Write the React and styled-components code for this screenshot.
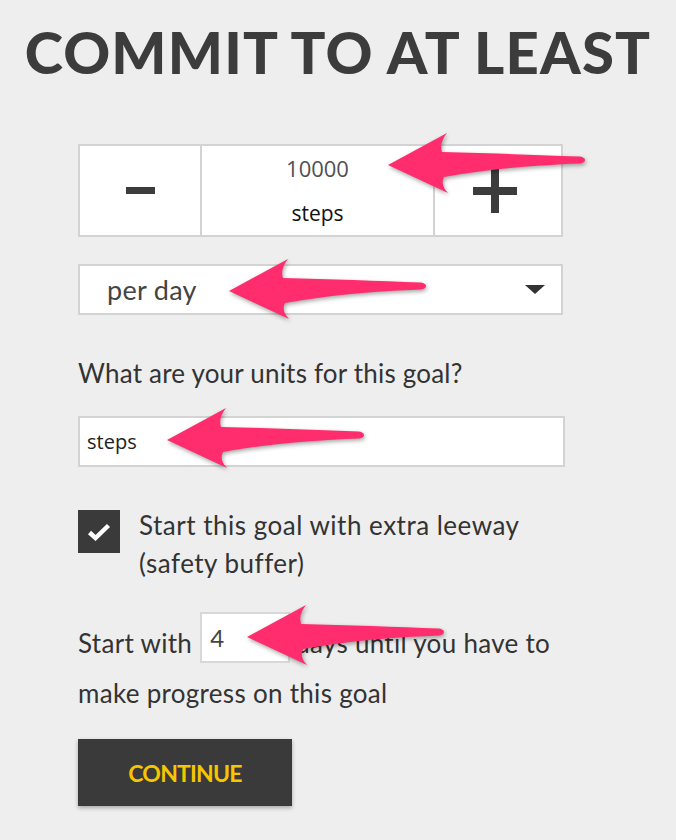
import React from "react";
import styled, { createGlobalStyle } from "styled-components";

const GlobalStyle = createGlobalStyle`
  html, body {
    margin: 0;
    padding: 0;
    background: #eeeeee;
  }
`;

const Page = styled.div`
  position: relative;
  width: 676px;
  min-height: 840px;
  box-sizing: border-box;
  padding-top: 20px;
  background: #eeeeee;
  font-family: Lato, "Open Sans", sans-serif;
  color: #333;
  overflow: hidden;
`;

const Title = styled.h1`
  margin: 0;
  text-align: center;
  font-family: Lato, sans-serif;
  font-weight: 900;
  font-size: 58px;
  line-height: 64px;
  color: #3c3c3c;
  letter-spacing: 1.2px;
`;

const Form = styled.div`
  margin: 60px 0 0 78px;
  width: 485px;
`;

const Stepper = styled.div`
  display: grid;
  grid-template-columns: 122px 233px 126px;
  height: 93px;
  box-sizing: border-box;
  border: 2px solid #d3d3d3;
  background: #fff;
`;

const StepCell = styled.div`
  display: flex;
  flex-direction: column;
  align-items: center;
  justify-content: center;
  border-right: ${(p) => (p.$last ? "none" : "2px solid #d3d3d3")};
`;

const MinusSign = styled.span`
  display: block;
  width: 29px;
  height: 7px;
  background: #3c3c3c;
`;

const PlusSign = styled.span`
  position: relative;
  display: block;
  width: 44px;
  height: 44px;
  margin-left: -6px;

  &::before,
  &::after {
    content: "";
    position: absolute;
    background: #3c3c3c;
  }
  &::before {
    left: 0;
    top: 18px;
    width: 44px;
    height: 8px;
  }
  &::after {
    left: 18px;
    top: 0;
    width: 8px;
    height: 44px;
  }
`;

const Amount = styled.div`
  font-family: "Open Sans", sans-serif;
  font-size: 22px;
  line-height: 28px;
  color: #505050;
`;

const AmountUnit = styled.div`
  margin-top: 17px;
  font-family: "Open Sans", sans-serif;
  font-size: 21px;
  line-height: 28px;
  color: #111;
`;

const Select = styled.div`
  margin-top: 27px;
  height: 51px;
  box-sizing: border-box;
  border: 2px solid #d3d3d3;
  background: #fff;
  display: flex;
  align-items: center;
  justify-content: space-between;
  padding: 0 16px 0 27px;
  font-size: 27px;
  letter-spacing: 0.3px;
  color: #444;
`;

const Caret = styled.span`
  width: 0;
  height: 0;
  border-left: 10px solid transparent;
  border-right: 10px solid transparent;
  border-top: 9px solid #333;
`;

const Label = styled.div`
  margin-top: 43px;
  font-size: 26px;
  line-height: 30px;
  letter-spacing: 0.2px;
  color: #333;
`;

const TextInput = styled.input`
  display: block;
  margin-top: 28px;
  width: 487px;
  height: 51px;
  box-sizing: border-box;
  border: 2px solid #d3d3d3;
  background: #fff;
  padding: 0 7px;
  font-family: "Open Sans", sans-serif;
  font-size: 20px;
  color: #222;
  outline: none;
`;

const CheckRow = styled.label`
  margin-top: 39px;
  display: flex;
  gap: 19px;
  align-items: flex-start;
`;

const CheckBox = styled.span`
  flex: none;
  margin-top: 4px;
  width: 42px;
  height: 43px;
  background: #3a3a3a;
  display: flex;
  align-items: center;
  justify-content: center;
`;

const CheckText = styled.span`
  font-size: 26px;
  line-height: 38px;
  letter-spacing: 0.5px;
  color: #333;
`;

const Sentence = styled.p`
  margin: 30px 0 0;
  font-size: 26px;
  line-height: 50px;
  letter-spacing: 0.3px;
  color: #333;
`;

const DaysInput = styled.input`
  vertical-align: 6px;
  width: 90px;
  height: 51px;
  box-sizing: border-box;
  margin: 0 5px 0 8px;
  border: 2px solid #d8d8d8;
  background: #fff;
  padding: 0 8px;
  font-family: Lato, sans-serif;
  font-size: 24px;
  color: #444;
  outline: none;
`;

const ContinueButton = styled.button`
  margin-top: 21px;
  width: 214px;
  height: 67px;
  border: none;
  background: #3a3a3a;
  box-shadow: 0 2px 4px rgba(0, 0, 0, 0.3);
  color: #f7c600;
  font-family: Lato, sans-serif;
  font-size: 23px;
  font-weight: 700;
  letter-spacing: -0.8px;
  cursor: pointer;
`;

const ArrowSvg = styled.svg`
  position: absolute;
  left: ${(p) => p.$x - 5}px;
  top: ${(p) => p.$y - 40}px;
  width: 210px;
  height: 80px;
  pointer-events: none;
  overflow: visible;
  filter: drop-shadow(1px 2px 2px rgba(0, 0, 0, 0.35));
`;

const PointerArrow = ({ x, y }) => (
  <ArrowSvg $x={x} $y={y} viewBox="-5 -40 210 80">
    <path
      d="M0 0 L59 -32 Q51 -22 54 -13 C100 -12 150 -10 192 -8.5 Q197 -7.5 197 -5 Q197 -2.5 192 -1.5 C150 0 100 4 56 12 Q52 20 60 28 Z"
      fill="#ff2d6d"
    />
  </ArrowSvg>
);

const App = () => {
  return (
    <Page>
      <GlobalStyle />
      <Title>COMMIT TO AT LEAST</Title>
      <Form>
        <Stepper>
          <StepCell>
            <MinusSign />
          </StepCell>
          <StepCell>
            <Amount>10000</Amount>
            <AmountUnit>steps</AmountUnit>
          </StepCell>
          <StepCell $last>
            <PlusSign />
          </StepCell>
        </Stepper>

        <Select>
          <span>per day</span>
          <Caret />
        </Select>

        <Label>What are your units for this goal?</Label>
        <TextInput defaultValue="steps" />

        <CheckRow>
          <CheckBox>
            <svg width="24" height="18" viewBox="0 0 24 18">
              <polyline points="2.5,9.5 8.5,15 21.5,2.5" fill="none" stroke="#fff" strokeWidth="4.5" />
            </svg>
          </CheckBox>
          <CheckText>
            Start this goal with extra leeway
            <br />
            (safety buffer)
          </CheckText>
        </CheckRow>

        <Sentence>
          Start with
          <DaysInput defaultValue="4" />
          days until you have to make progress on this goal
        </Sentence>

        <ContinueButton>CONTINUE</ContinueButton>
      </Form>

      <PointerArrow x={388} y={165} />
      <PointerArrow x={229} y={291} />
      <PointerArrow x={167} y={440} />
      <PointerArrow x={247} y={637} />
    </Page>
  );
};

export default App;
